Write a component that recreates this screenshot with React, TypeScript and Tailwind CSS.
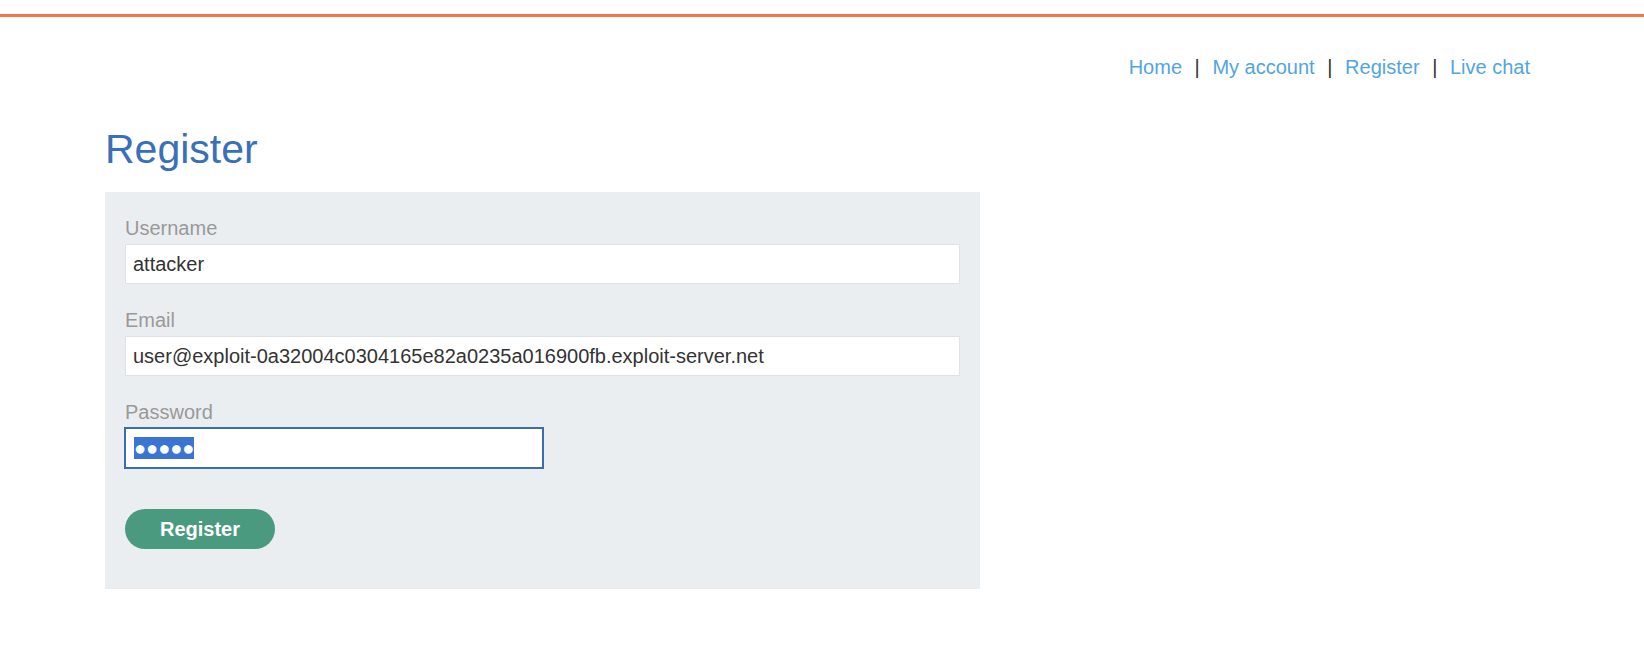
import React from "react";

const navLinks = ["Home", "My account", "Register", "Live chat"];

function Field({ label, value }: { label: string; value: string }) {
  return (
    <div className="mb-6">
      <label className="mb-1 block text-[20px] leading-6 text-[#999999]">{label}</label>
      <div className="flex h-10 w-full items-center border border-[#e0e3e6] bg-white px-[7px] text-[20px] text-[#333333]">
        {value}
      </div>
    </div>
  );
}

export default function App() {
  return (
    <div
      className="min-h-[648px] w-full bg-white"
      style={{ fontFamily: '"Liberation Sans", Arial, sans-serif' }}
    >
      <div className="h-[14px]" />
      <div className="h-[3px] w-full bg-[#f37548]" />

      <nav className="mt-[39px] flex justify-end pr-[114px] text-[20px] leading-[23px]">
        {navLinks.map((link, i) => (
          <React.Fragment key={link}>
            {i > 0 ? <span className="mx-[12.6px] text-[#333333]">|</span> : null}
            <a href="#" className="text-[#52a5e0]">
              {link}
            </a>
          </React.Fragment>
        ))}
      </nav>

      <main className="pl-[105px]">
        <h1 className="mt-[46px] mb-[19px] text-[41px] leading-[48px] text-[#3a70b8]">Register</h1>

        <form className="w-[875px] bg-[#eaeef1] px-5 pt-6 pb-10" onSubmit={(e) => e.preventDefault()}>
          <Field label="Username" value="attacker" />
          <Field label="Email" value="user@exploit-0a32004c0304165e82a0235a016900fb.exploit-server.net" />

          <div>
            <label className="mb-1 block text-[20px] leading-6 text-[#999999]">Password</label>
            <div className="flex h-10 w-[418px] items-center border border-[#3a6db5] bg-white pl-[8px] outline outline-1 outline-[#3a6db5]">
              <span className="bg-[#3a75d3] text-[20px] leading-[22px] text-white">●●●●●</span>
            </div>
          </div>

          <button
            type="submit"
            className="mt-[41px] flex h-10 w-[150px] items-center justify-center rounded-full bg-[#4a9a80] text-[20px] font-bold text-white"
          >
            Register
          </button>
        </form>
      </main>
    </div>
  );
}
